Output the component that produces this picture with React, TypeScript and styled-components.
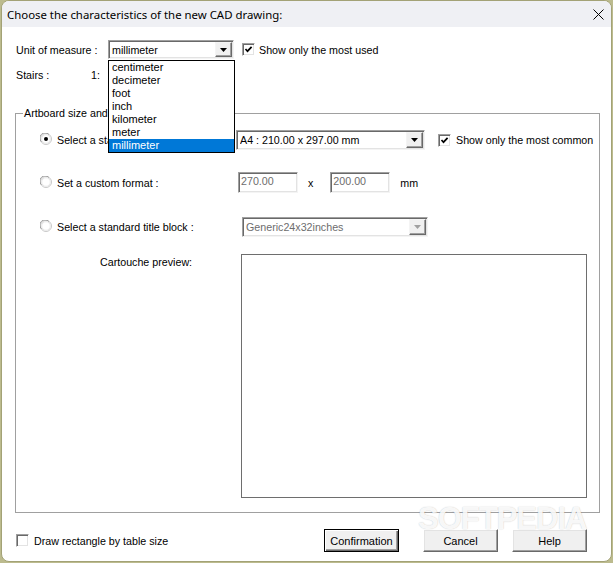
import styled, { createGlobalStyle } from 'styled-components'

const GlobalStyle = createGlobalStyle`
  html, body {
    margin: 0;
    padding: 0;
    background: #bcbb8e;
  }
  body {
    width: 613px;
    height: 563px;
    overflow: hidden;
    font-family: "Liberation Sans", Arial, sans-serif;
    font-size: 10.7px;
    color: #000;
  }
`

const Window = styled.div`
  position: relative;
  box-sizing: border-box;
  width: 611px;
  height: 562px;
  margin-left: 1px;
  border: 1px solid #a3a276;
  border-radius: 8px;
  background: #fff;
  overflow: hidden;
  display: flex;
  flex-direction: column;
`

const TitleBar = styled.div`
  height: 26px;
  flex: none;
  background: #eff0f4;
  display: flex;
  align-items: center;
  padding: 0 7px 0 5px;
  font-family: "Noto Sans", "Open Sans", sans-serif;
  font-size: 11.4px;
  color: #000;
`

const TitleText = styled.span`
  flex: 1;
`

const Body = styled.div`
  flex: 1;
  padding: 13px 0 0 14px;
  display: flex;
  flex-direction: column;
`

const Row = styled.div<{ $h: number; $mt?: number }>`
  display: flex;
  align-items: center;
  height: ${p => p.$h}px;
  margin-top: ${p => p.$mt ?? 0}px;
`

const Label = styled.span<{ $w?: number; $ml?: number; $muted?: boolean }>`
  ${p => (p.$w ? `width: ${p.$w}px; flex: none;` : '')}
  margin-left: ${p => p.$ml ?? 0}px;
  white-space: nowrap;
  color: ${p => (p.$muted ? '#6d6d6d' : '#000')};
`

const ComboWrap = styled.div<{ $w: number; $h: number; $ml?: number }>`
  position: relative;
  flex: none;
  box-sizing: border-box;
  width: ${p => p.$w}px;
  height: ${p => p.$h}px;
  margin-left: ${p => p.$ml ?? 0}px;
  border: 1px solid;
  border-color: #a0a0a0 #f4f4f4 #f4f4f4 #a0a0a0;
  box-shadow: inset 1px 1px 0 #696969, inset -1px -1px 0 #e3e3e3;
  background: #fff;
  display: flex;
  align-items: center;
  padding: 0 1px 0 3px;
`

const ComboText = styled.span<{ $disabled?: boolean }>`
  flex: 1;
  white-space: nowrap;
  overflow: hidden;
  color: ${p => (p.$disabled ? '#6d6d6d' : '#000')};
`

const ArrowButton = styled.span`
  box-sizing: border-box;
  width: 17px;
  height: calc(100% - 2px);
  background: #f0f0f0;
  border: 1px solid;
  border-color: #f4f4f4 #696969 #696969 #f4f4f4;
  box-shadow: inset -1px -1px 0 #a0a0a0;
  display: flex;
  align-items: center;
  justify-content: center;
`

const DropList = styled.div`
  position: absolute;
  left: -1px;
  top: 19px;
  width: 127px;
  box-sizing: border-box;
  border: 1px solid #000;
  background: #fff;
  z-index: 5;
  font-size: 11px;
`

const DropItem = styled.div<{ $selected?: boolean }>`
  height: 13px;
  line-height: 13px;
  padding-left: 3px;
  background: ${p => (p.$selected ? '#0078d7' : 'transparent')};
  color: ${p => (p.$selected ? '#fff' : '#000')};
`

const CheckBox = styled.span<{ $ml?: number }>`
  flex: none;
  box-sizing: border-box;
  width: 13px;
  height: 13px;
  margin-left: ${p => p.$ml ?? 0}px;
  border: 1px solid;
  border-color: #a0a0a0 #fff #fff #a0a0a0;
  box-shadow: inset 1px 1px 0 #696969, inset -1px -1px 0 #e3e3e3;
  background: #fff;
  display: flex;
  align-items: center;
  justify-content: center;
`

const Group = styled.div`
  position: relative;
  box-sizing: border-box;
  width: 585px;
  height: 400px;
  margin: 32px 0 0 -1px;
  border: 1px solid #a0a0a0;
  padding: 16px 0 0 24px;
`

const Legend = styled.span`
  position: absolute;
  left: 7px;
  top: -7px;
  padding: 0 1px;
  line-height: 13px;
  background: #fff;
  white-space: nowrap;
`

const Option = styled.div<{ $w: number }>`
  flex: none;
  width: ${p => p.$w}px;
  display: flex;
  align-items: center;
  gap: 5px;
`

const RadioWrap = styled.span`
  flex: none;
  display: flex;
  margin-top: -2px;
`

const TextInput = styled.span<{ $ml?: number }>`
  flex: none;
  box-sizing: border-box;
  width: 60px;
  height: 21px;
  margin-left: ${p => p.$ml ?? 0}px;
  border: 1px solid;
  border-color: #a0a0a0 #f4f4f4 #f4f4f4 #a0a0a0;
  box-shadow: inset 1px 1px 0 #696969, inset -1px -1px 0 #e3e3e3;
  background: #fff;
  color: #6d6d6d;
  padding: 2px 0 0 2px;
`

const PreviewRow = styled.div`
  display: flex;
  margin-top: 17px;
`

const PreviewLabel = styled.div`
  width: 201px;
  flex: none;
  box-sizing: border-box;
  padding: 2px 0 0 60px;
  white-space: nowrap;
`

const PreviewBox = styled.div`
  box-sizing: border-box;
  width: 346px;
  height: 244px;
  border: 1px solid #6e6e6e;
  background: #fff;
`

const BottomRow = styled.div`
  display: flex;
  align-items: center;
  height: 23px;
  margin-top: 16px;
  padding-right: 24px;
`

const Button = styled.button<{ $default?: boolean; $ml?: number }>`
  box-sizing: border-box;
  width: 75px;
  height: 23px;
  margin-left: ${p => p.$ml ?? 0}px;
  padding: 0;
  background: #f0f0f0;
  font-family: "Liberation Sans", Arial, sans-serif;
  font-size: 11px;
  color: #000;
  border: 1px solid;
  border-color: ${p => (p.$default ? '#000' : '#fff #696969 #696969 #fff')};
  box-shadow: ${p =>
    p.$default
      ? 'inset 1px 1px 0 #fff, inset -1px -1px 0 #696969, inset -2px -2px 0 #a0a0a0'
      : 'inset -1px -1px 0 #a0a0a0, inset 1px 1px 0 #e3e3e3'};
`

const Watermark = styled.div`
  position: absolute;
  left: 416px;
  bottom: 24px;
  font-family: "Liberation Sans", Arial, sans-serif;
  font-weight: bold;
  font-size: 31px;
  letter-spacing: -1px;
  color: rgba(255, 255, 255, 0.9);
  text-shadow: 0 0 1px rgba(0, 0, 0, 0.18), 0 0 2px rgba(0, 0, 0, 0.08);
  pointer-events: none;
`

const Arrow = ({ disabled }: { disabled?: boolean }) => (
  <svg width="7" height="4" viewBox="0 0 7 4">
    <path d="M0 0h7L3.5 4z" fill={disabled ? '#a0a0a0' : '#000'} />
  </svg>
)

const Check = () => (
  <svg width="9" height="9" viewBox="0 0 9 9">
    <path d="M1.5 4 L3.5 6.2 L7.6 1.8" fill="none" stroke="#000" strokeWidth="1.7" />
  </svg>
)

const Radio = ({ on }: { on?: boolean }) => (
  <RadioWrap>
    <svg width="12" height="12" viewBox="0 0 12 12">
      <circle cx="6" cy="6" r="5.5" fill="#fff" stroke="#c8c8c8" />
      <path d="M1.4 8.8 A5 5 0 0 1 8.8 1.4" fill="none" stroke="#9a9a9a" />
      <circle cx="6" cy="6" r="4.3" fill="none" stroke="#e6e6e6" />
      {on && <circle cx="6" cy="6" r="2" fill="#000" />}
    </svg>
  </RadioWrap>
)

const Combo = (props: { w: number; h: number; ml?: number; text: string; disabled?: boolean; children?: any }) => (
  <ComboWrap $w={props.w} $h={props.h} $ml={props.ml}>
    <ComboText $disabled={props.disabled}>{props.text}</ComboText>
    <ArrowButton><Arrow disabled={props.disabled} /></ArrowButton>
    {props.children}
  </ComboWrap>
)

const units = ['centimeter', 'decimeter', 'foot', 'inch', 'kilometer', 'meter', 'millimeter']

export default function App () {
  return (
    <>
      <GlobalStyle />
      <Window>
        <TitleBar>
          <TitleText>Choose the characteristics of the new CAD drawing:</TitleText>
          <svg width="11" height="11" viewBox="0 0 11 11">
            <path d="M0.5 0.5 L10.5 10.5 M10.5 0.5 L0.5 10.5" stroke="#000" strokeWidth="1" />
          </svg>
        </TitleBar>
        <Body>
          <Row $h={19}>
            <Label $w={92}>Unit of measure :</Label>
            <Combo w={126} h={19} text="millimeter">
              <DropList>
                {units.map(u => (
                  <DropItem key={u} $selected={u === 'millimeter'}>{u}</DropItem>
                ))}
              </DropList>
            </Combo>
            <CheckBox $ml={8}><Check /></CheckBox>
            <Label $ml={4}>Show only the most used</Label>
          </Row>
          <Row $h={13} $mt={9}>
            <Label $w={75}>Stairs :</Label>
            <Label>1:</Label>
          </Row>

          <Group>
            <Legend>Artboard size and format</Legend>
            <Row $h={20}>
              <Option $w={196}>
                <Radio on />
                <Label>Select a standard format :</Label>
              </Option>
              <Combo w={189} h={20} text="A4 : 210.00 x 297.00 mm" />
              <CheckBox $ml={13}><Check /></CheckBox>
              <Label $ml={5}>Show only the most common</Label>
            </Row>
            <Row $h={21} $mt={22}>
              <Option $w={198}>
                <Radio />
                <Label>Set a custom format :</Label>
              </Option>
              <TextInput>270.00</TextInput>
              <Label $ml={10}>x</Label>
              <TextInput $ml={17}>200.00</TextInput>
              <Label $ml={10}>mm</Label>
            </Row>
            <Row $h={20} $mt={24}>
              <Option $w={202}>
                <Radio />
                <Label>Select a standard title block :</Label>
              </Option>
              <Combo w={186} h={20} text="Generic24x32inches" disabled />
            </Row>
            <PreviewRow>
              <PreviewLabel>Cartouche preview:</PreviewLabel>
              <PreviewBox />
            </PreviewRow>
          </Group>

          <BottomRow>
            <CheckBox />
            <Label $ml={5}>Draw rectangle by table size</Label>
            <Button $default style={{ marginLeft: 'auto' }}>Confirmation</Button>
            <Button $ml={24}>Cancel</Button>
            <Button $ml={14}>Help</Button>
          </BottomRow>
        </Body>
        <Watermark>SOFTPEDIA</Watermark>
      </Window>
    </>
  )
}
